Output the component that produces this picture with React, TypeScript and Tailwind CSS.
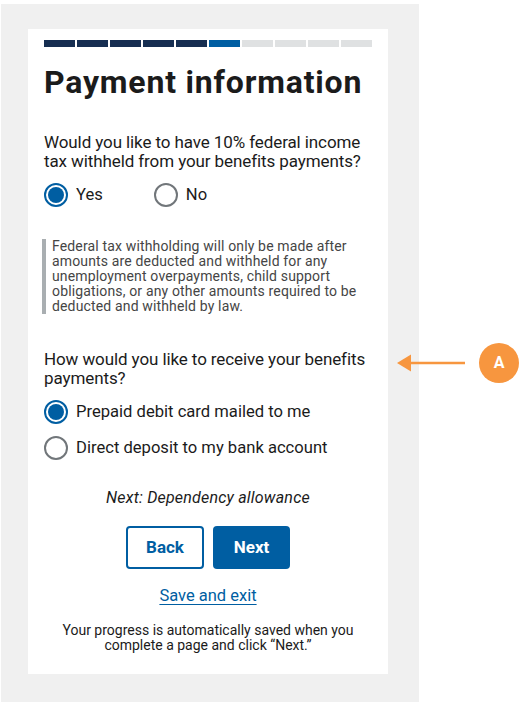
import React from "react";

const font = { fontFamily: "Roboto, 'Noto Sans', sans-serif" };

const steps = ["done", "done", "done", "done", "done", "current", "todo", "todo", "todo", "todo"];

function Radio({ checked, label }: { checked?: boolean; label: string }) {
  return (
    <div className="flex items-center gap-2">
      {checked ? (
        <span className="flex h-6 w-6 shrink-0 rounded-full border-2 border-[#005ea2] p-[2px]">
          <span className="h-full w-full rounded-full bg-[#005ea2]" />
        </span>
      ) : (
        <span className="h-6 w-6 shrink-0 rounded-full border-2 border-[#71767a] bg-white" />
      )}
      <span className="text-[16.6px] leading-[20px] text-[#1b1b1b]">{label}</span>
    </div>
  );
}

export default function App() {
  return (
    <div className="relative min-h-[704px] bg-white" style={font}>
      <div className="flex pl-[1px] pt-[4px]">
        <div className="w-[418px] bg-[#f0f0f0] pb-[28px] pl-[27px] pt-[25px]">
          <div className="w-[360px] bg-white px-4 pb-[21px] pt-[11px] text-[#1b1b1b]">
            {/* step indicator */}
            <div className="flex gap-[2px]">
              {steps.map((s, i) => (
                <div
                  key={i}
                  className={`h-[7px] flex-1 ${
                    s === "done" ? "bg-[#162e51]" : s === "current" ? "bg-[#005ea2]" : "bg-[#dfe1e2]"
                  }`}
                />
              ))}
            </div>

            <h1 className="mt-[15px] text-[32px] font-bold leading-[40px] tracking-[0.8px]">Payment information</h1>

            <p className="mt-[31px] text-[17px] leading-[18.5px] tracking-[-0.1px]">
              Would you like to have 10% federal income tax withheld from your benefits payments?
            </p>
            <div className="mt-[13px] flex gap-[51px]">
              <Radio checked label="Yes" />
              <Radio label="No" />
            </div>

            <div className="ml-[-2px] mt-[32px] border-l-4 border-[#a9aeb1] pl-[6px] text-[14px] leading-[15px] tracking-[0.15px] text-[#454545]">
              Federal tax withholding will only be made after amounts are deducted and withheld for any
              unemployment overpayments, child support obligations, or any other amounts required to be
              deducted and withheld by law.
            </div>

            <p className="mt-[36px] text-[17px] leading-[18.5px] tracking-[-0.1px]">
              How would you like to receive your benefits payments?
            </p>
            <div className="mt-[13px] flex flex-col gap-[12px]">
              <Radio checked label="Prepaid debit card mailed to me" />
              <Radio label="Direct deposit to my bank account" />
            </div>

            <p className="mt-[28px] text-center text-[16px] italic leading-[20px] tracking-[0.2px]">
              Next: Dependency allowance
            </p>

            <div className="mt-[18px] flex justify-center gap-[9px]">
              <button className="h-[43px] w-[78px] rounded-[4px] border-2 border-[#005ea2] bg-white text-[17px] font-bold text-[#005ea2]">
                Back
              </button>
              <button className="h-[43px] w-[77px] rounded-[4px] bg-[#005ea2] text-[17px] font-bold text-white">
                Next
              </button>
            </div>

            <div className="mt-[15px] text-center">
              <a className="text-[16.5px] leading-[20px] text-[#005ea2] underline underline-offset-[3px]">Save and exit</a>
            </div>

            <p className="mt-[15px] text-center text-[14px] leading-[15px]">
              Your progress is automatically saved when you
              <br />
              complete a page and click “Next.”
            </p>
          </div>
        </div>
      </div>

      {/* annotation */}
      <svg className="absolute left-[396px] top-[353px]" width="72" height="21" viewBox="0 0 72 21">
        <line x1="14" y1="10" x2="69" y2="10" stroke="#f7963f" strokeWidth="2.5" />
        <polygon points="1,10 15,1.5 15,18.5" fill="#f7963f" />
      </svg>
      <div className="absolute left-[479px] top-[343px] flex h-10 w-10 items-center justify-center rounded-full bg-[#f7963f] text-[16px] font-bold text-white">
        A
      </div>
    </div>
  );
}
